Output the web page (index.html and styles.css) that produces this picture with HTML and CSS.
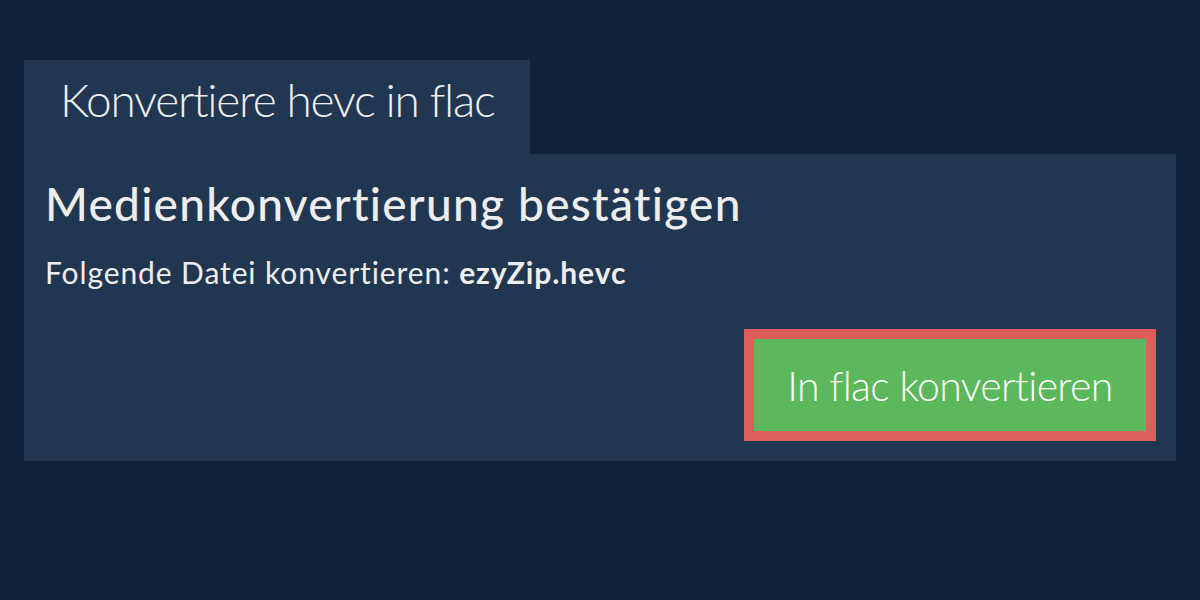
FILE: index.html
```html
<!DOCTYPE html>
<html lang="de">
<head>
<meta charset="utf-8">
<title>Konvertiere hevc in flac</title>
<link rel="stylesheet" href="styles.css">
</head>
<body>
<main class="wrap">
  <div class="tab">Konvertiere hevc in flac</div>
  <section class="card">
    <h1 class="title">Medienkonvertierung bestätigen</h1>
    <p class="desc">Folgende Datei konvertieren: <strong>ezyZip.hevc</strong></p>
    <div class="actions">
      <button class="convert" type="button">In flac konvertieren</button>
    </div>
  </section>
</main>
</body>
</html>
```

FILE: styles.css
```css
html, body {
  margin: 0;
  padding: 0;
}
body {
  background: #10233a;
  font-family: Lato, "Open Sans", sans-serif;
  color: #eeeeee;
  width: 1200px;
  height: 600px;
  overflow: hidden;
}
.wrap {
  padding: 60px 24px 0 24px;
  display: flex;
  flex-direction: column;
  align-items: flex-start;
}
.tab {
  background: #213650;
  box-sizing: border-box;
  width: 506px;
  height: 94px;
  padding: 12px 0 0 36px;
  font-size: 46px;
  font-weight: 300;
  line-height: 1.2;
  letter-spacing: -1.3px;
  white-space: nowrap;
}
.card {
  align-self: stretch;
  background: #213650;
  box-sizing: border-box;
  height: 307px;
  padding: 22px 20px 20px 21px;
  display: flex;
  flex-direction: column;
}
.title {
  margin: 0;
  font-size: 46px;
  font-weight: 500;
  line-height: 1.2;
  letter-spacing: 1.25px;
  white-space: nowrap;
}
.desc {
  margin: 23px 0 0 0;
  font-size: 30px;
  font-weight: 400;
  line-height: 1.2;
  letter-spacing: 0.9px;
  white-space: nowrap;
}
.desc strong {
  font-weight: 700;
}
.actions {
  margin-top: auto;
  display: flex;
  justify-content: flex-end;
}
.convert {
  box-sizing: border-box;
  width: 412px;
  height: 112px;
  background: #5cb85c;
  border: 10px solid #dc5f5c;
  color: #ffffff;
  font-family: Lato, "Open Sans", sans-serif;
  font-size: 41px;
  font-weight: 300;
  letter-spacing: -0.65px;
  padding: 0;
  margin: 0;
  border-radius: 0;
}
```
